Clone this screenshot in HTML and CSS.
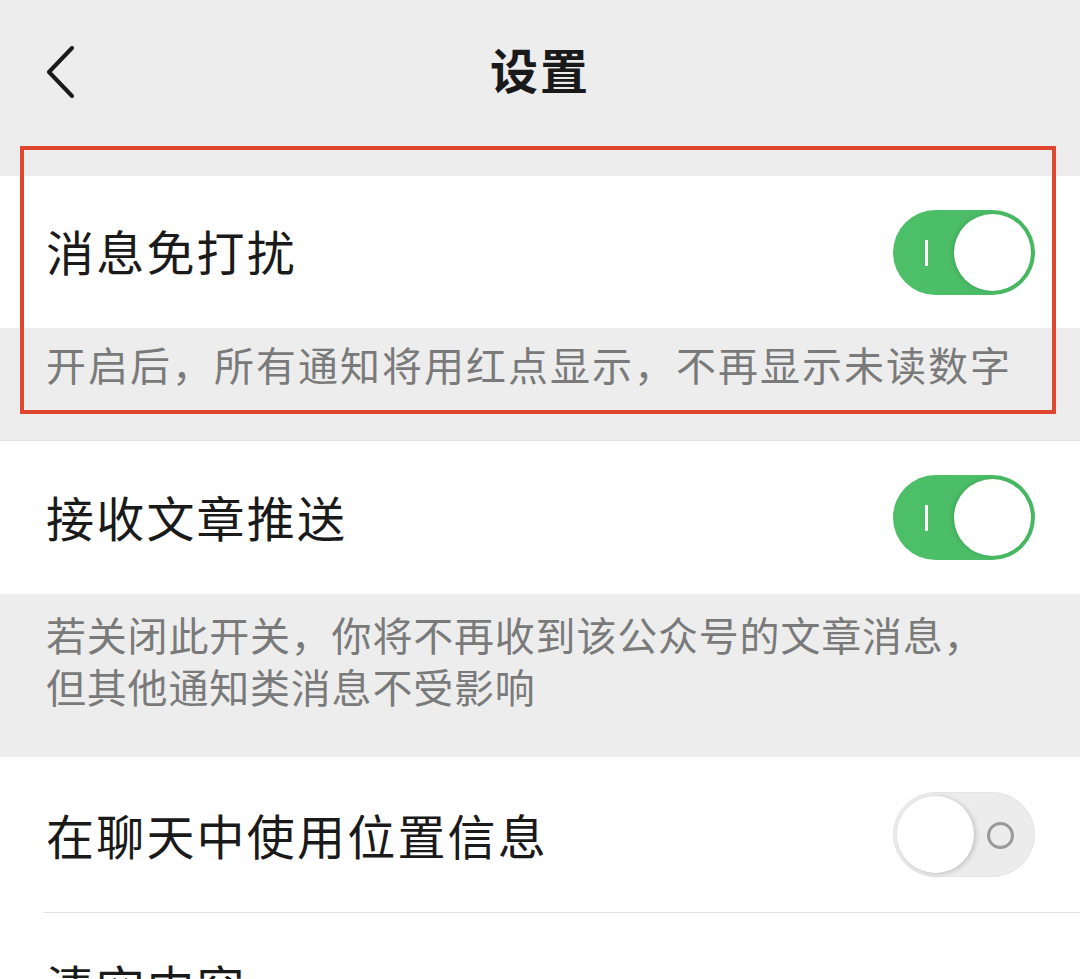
FILE: index.html
```html
<!DOCTYPE html>
<html lang="zh-CN">
<head>
<meta charset="utf-8">
<title>设置</title>
<link rel="stylesheet" href="styles.css">
</head>
<body>
<div class="page">
  <header class="navbar">
    <svg class="back" width="40" height="60" viewBox="0 0 40 60">
      <polyline points="26,2 3,26 26,50" fill="none" stroke="#1a1a1a" stroke-width="4" stroke-linecap="round" stroke-linejoin="round"/>
    </svg>
    <h1 class="title">设置</h1>
  </header>

  <section class="group group-first">
    <div class="row">
      <span class="label">消息免打扰</span>
      <span class="switch on"><span class="mark-on"></span><span class="knob"></span></span>
    </div>
    <p class="desc desc-one">开启后，所有通知将用红点显示，不再显示未读数字</p>
    <div class="highlight"></div>
  </section>

  <section class="group">
    <div class="row row-b">
      <span class="label">接收文章推送</span>
      <span class="switch on"><span class="mark-on"></span><span class="knob"></span></span>
    </div>
    <p class="desc desc-two"><span class="line">若关闭此开关，你将不再收到该公众号的文章消息，</span><span class="line">但其他通知类消息不受影响</span></p>
  </section>

  <section class="group list">
    <div class="row row-c">
      <span class="label">在聊天中使用位置信息</span>
      <span class="switch off"><span class="knob"></span><span class="mark-off"></span></span>
    </div>
    <div class="cell">
      <div class="row row-d">
        <span class="label">清空内容</span>
        <svg class="chev" width="20" height="40" viewBox="0 0 20 40"><polyline points="3,3 17,20 3,37" fill="none" stroke="#b5b5b5" stroke-width="4" stroke-linecap="round"/></svg>
      </div>
    </div>
  </section>
</div>
</body>
</html>
```

FILE: styles.css
```css
html, body {
  margin: 0;
  padding: 0;
  background: #ededed;
}
body {
  font-family: "Noto Sans CJK SC", "Noto Sans", sans-serif;
  color: #1a1a1a;
  width: 1080px;
  height: 979px;
  overflow: hidden;
}
.page {
  position: relative;
  width: 1080px;
}
.navbar {
  height: 176px;
  box-sizing: border-box;
  padding-top: 18px;
  display: flex;
  position: relative;
  justify-content: center;
}
.back {
  position: absolute;
  left: 46px;
  top: 46px;
}
.title {
  margin: 0;
  font-size: 48px;
  font-weight: 700;
  line-height: 100px;
  letter-spacing: 2px;
  height: 100px;
}
.group {
  position: relative;
}
.row {
  background: #fff;
  height: 152px;
  box-sizing: border-box;
  display: flex;
  align-items: center;
  justify-content: space-between;
  padding: 0 45px 4px 46px;
}
.row-b {
  height: 154px;
  border-top: 1px solid #e2e2e2;
}
.row-c {
  height: 155px;
  padding-bottom: 2px;
}
.cell {
  background: #fff;
  padding-left: 43px;
}
.row-d {
  height: 160px;
  border-top: 1px solid #e2e2e2;
  padding-left: 3px;
  align-items: flex-start;
  padding-top: 48px;
}
.label {
  font-size: 48px;
  letter-spacing: 2.2px;
  line-height: 1;
}
.desc {
  margin: 0;
  color: #7a7a7a;
  font-size: 40px;
  letter-spacing: 2px;
  line-height: 52px;
  padding: 0 46px;
}
.desc-one {
  height: 112px;
  box-sizing: border-box;
  padding-top: 10px;
}
.desc-two {
  height: 163px;
  box-sizing: border-box;
  padding-top: 14px;
  letter-spacing: 0.8px;
  display: flex;
  flex-direction: column;
}
.line {
  display: block;
  height: 52px;
}
.highlight {
  position: absolute;
  left: 20px;
  top: -30px;
  width: 1036px;
  height: 268px;
  box-sizing: border-box;
  border: 4px solid #e0452f;
  pointer-events: none;
}
.switch {
  position: relative;
  width: 142px;
  height: 85px;
  border-radius: 43px;
  box-sizing: border-box;
  flex-shrink: 0;
  margin-top: 4px;
}
.row-c .switch {
  margin-top: 2px;
}
.switch.on {
  background: linear-gradient(90deg, #4cbf68 0%, #4bbd66 60%, #47b862 100%);
}
.switch.off {
  background: #ececec;
  border: 1px solid #e4e4e4;
}
.knob {
  position: absolute;
  top: 4px;
  width: 77px;
  height: 77px;
  border-radius: 50%;
  background: #fff;
}
.switch.on .knob {
  right: 4px;
  box-shadow: -2px 0 4px rgba(0,0,0,0.12);
}
.switch.off .knob {
  left: 3px;
  top: 3px;
  box-shadow: 2px 1px 5px rgba(0,0,0,0.18);
}
.mark-on {
  position: absolute;
  left: 32px;
  top: 30px;
  width: 3px;
  height: 26px;
  background: #fff;
}
.mark-off {
  position: absolute;
  right: 20px;
  top: 29px;
  width: 21px;
  height: 21px;
  border: 3px solid #9a9a9a;
  border-radius: 50%;
}
.chev {
  margin-top: 26px;
  margin-right: 50px;
}
```
